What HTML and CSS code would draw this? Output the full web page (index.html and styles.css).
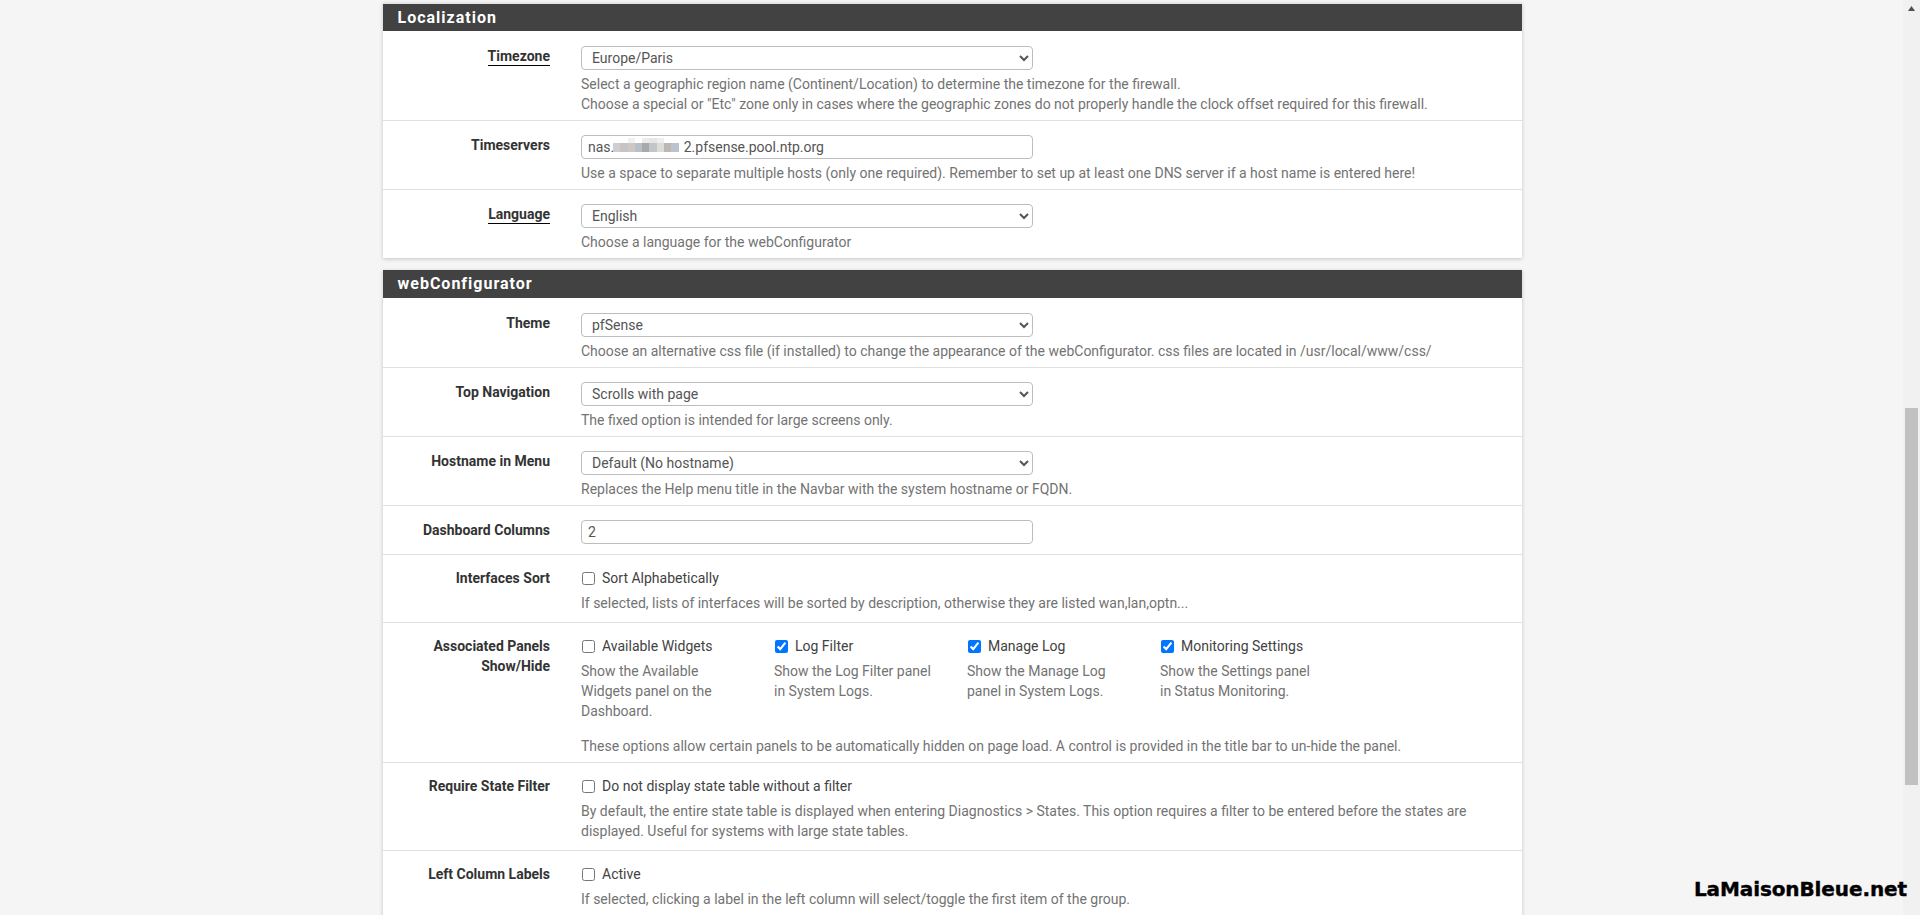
FILE: index.html
```html
<!DOCTYPE html>
<html lang="en">
<head>
<meta charset="utf-8">
<title>System: General Setup</title>
<link rel="stylesheet" href="styles.css">
</head>
<body>
<div class="viewport">
  <main class="content">
    <section class="panel">
      <h2 class="panel-title">Localization</h2>
      <div class="row row-first">
        <div class="label"><span class="toggle-label">Timezone</span></div>
        <div class="field">
          <select class="control"><option>Europe/Paris</option></select>
          <p class="help">Select a geographic region name (Continent/Location) to determine the timezone for the firewall.<br>Choose a special or "Etc" zone only in cases where the geographic zones do not properly handle the clock offset required for this firewall.</p>
        </div>
      </div>
      <div class="row">
        <div class="label">Timeservers</div>
        <div class="field">
          <div class="masked">
            <input class="control text" type="text" value="nas.                    2.pfsense.pool.ntp.org">
            <div class="mosaic">
              <i class="m1"></i><i class="m2"></i><i class="m3"></i><i class="m4"></i><i class="m5"></i><i class="m6"></i><i class="m7"></i><i class="m8"></i><i class="m9"></i>
            </div>
          </div>
          <p class="help">Use a space to separate multiple hosts (only one required). Remember to set up at least one DNS server if a host name is entered here!</p>
        </div>
      </div>
      <div class="row">
        <div class="label"><span class="toggle-label">Language</span></div>
        <div class="field">
          <select class="control"><option>English</option></select>
          <p class="help">Choose a language for the webConfigurator</p>
        </div>
      </div>
    </section>

    <section class="panel">
      <h2 class="panel-title">webConfigurator</h2>
      <div class="row row-first">
        <div class="label">Theme</div>
        <div class="field">
          <select class="control"><option>pfSense</option></select>
          <p class="help">Choose an alternative css file (if installed) to change the appearance of the webConfigurator. css files are located in /usr/local/www/css/</p>
        </div>
      </div>
      <div class="row">
        <div class="label">Top Navigation</div>
        <div class="field">
          <select class="control"><option>Scrolls with page</option></select>
          <p class="help">The fixed option is intended for large screens only.</p>
        </div>
      </div>
      <div class="row">
        <div class="label">Hostname in Menu</div>
        <div class="field">
          <select class="control"><option>Default (No hostname)</option></select>
          <p class="help">Replaces the Help menu title in the Navbar with the system hostname or FQDN.</p>
        </div>
      </div>
      <div class="row row-plain">
        <div class="label">Dashboard Columns</div>
        <div class="field">
          <input class="control text" type="text" value="2">
        </div>
      </div>
      <div class="row row-check">
        <div class="label">Interfaces Sort</div>
        <div class="field">
          <label class="check"><input type="checkbox">Sort Alphabetically</label>
          <p class="help">If selected, lists of interfaces will be sorted by description, otherwise they are listed wan,lan,optn...</p>
        </div>
      </div>
      <div class="row row-panels">
        <div class="label">Associated Panels<br>Show/Hide</div>
        <div class="field">
          <div class="columns">
            <div class="column">
              <label class="check"><input type="checkbox">Available Widgets</label>
              <p class="help">Show the Available Widgets panel on the Dashboard.</p>
            </div>
            <div class="column">
              <label class="check"><input type="checkbox" checked>Log Filter</label>
              <p class="help">Show the Log Filter panel in System Logs.</p>
            </div>
            <div class="column">
              <label class="check"><input type="checkbox" checked>Manage Log</label>
              <p class="help">Show the Manage Log panel in System Logs.</p>
            </div>
            <div class="column">
              <label class="check"><input type="checkbox" checked>Monitoring Settings</label>
              <p class="help">Show the Settings panel in Status Monitoring.</p>
            </div>
          </div>
          <p class="help help-note">These options allow certain panels to be automatically hidden on page load. A control is provided in the title bar to un-hide the panel.</p>
        </div>
      </div>
      <div class="row row-check">
        <div class="label">Require State Filter</div>
        <div class="field">
          <label class="check"><input type="checkbox">Do not display state table without a filter</label>
          <p class="help">By default, the entire state table is displayed when entering Diagnostics &gt; States. This option requires a filter to be entered before the states are displayed. Useful for systems with large state tables.</p>
        </div>
      </div>
      <div class="row row-check">
        <div class="label">Left Column Labels</div>
        <div class="field">
          <label class="check"><input type="checkbox">Active</label>
          <p class="help">If selected, clicking a label in the left column will select/toggle the first item of the group.</p>
        </div>
      </div>
    </section>
  </main>
  <aside class="scrollbar">
    <svg class="arrow" width="7" height="5" viewBox="0 0 7 5"><path d="M3.5 0L7 5H0z"/></svg>
    <div class="thumb"></div>
  </aside>
  <div class="watermark">LaMaisonBleue.net</div>
</div>
</body>
</html>
```
FILE: styles.css
```css
* { box-sizing: border-box; }
html, body { height: 100%; margin: 0; overflow: hidden; }
body {
  background: #f5f5f5;
  font-family: Roboto, "Liberation Sans", sans-serif;
  font-size: 14px;
  line-height: 20px;
  color: #333;
}
.viewport {
  position: relative;
  display: flex;
  height: 915px;
  overflow: hidden;
}
.content {
  flex: 1;
  min-width: 0;
  padding: 3px 0 0 382.5px;
}
.panel {
  width: 1139px;
  margin-bottom: 12px;
  background: #fff;
  box-shadow: 0 1px 4px rgba(0, 0, 0, .2);
}
.panel-title {
  height: 28px;
  margin: 0;
  padding: 0 15px;
  background: #424242;
  color: #fff;
  font-size: 16px;
  font-weight: 700;
  line-height: 27px;
  letter-spacing: 1px;
}
.panel:first-child .panel-title { border-top: 1px solid #e4e4e4; }
.row {
  display: flex;
  padding: 14px 0 6px;
  border-top: 1px solid #e0e0e0;
}
.row-first { padding-top: 15px; border-top: 0; }
.row-plain { padding-bottom: 10px; }
.row-check { padding: 13px 0 9px; }
.row-panels { padding: 13px 0 6px; }
.label {
  flex: 0 0 167.5px;
  text-align: right;
  font-weight: 700;
  font-size: 14px;
  color: #333;
}
.toggle-label { padding-bottom: 1px; border-bottom: 1px solid #000; }
.field {
  flex: 1;
  min-width: 0;
  margin-left: 31px;
  padding-right: 23px;
}
.control {
  display: block;
  width: 451.5px;
  height: 24px;
  padding: 0 6px;
  background: #fff;
  border: 1px solid #bdbdbd;
  border-radius: 4px;
  font: 14px/20px Roboto, "Liberation Sans", sans-serif;
  color: #555;
}
.help {
  margin: 4px 0 0;
  font-size: 14px;
  color: #737373;
}
.check {
  display: flex;
  align-items: center;
  height: 20px;
  font-size: 14px;
  color: #424242;
}
.check input {
  flex: none;
  width: 13px;
  height: 13px;
  margin: 0 7px 0 1px;
}
.check + .help, .column .help { margin-top: 5px; }
.columns { display: flex; }
.column { flex: 0 0 193px; padding-right: 30px; min-height: 85px; }
.help-note { margin-top: 15px; }
.masked { position: relative; width: 451px; }
.mosaic {
  position: absolute;
  left: 32px;
  top: 3px;
  display: flex;
  height: 14px;
}
.mosaic i { display: block; width: 7.3px; height: 14px; background: #d8d8d8; }
.mosaic .m1 { background: linear-gradient(#fff 0 5px, #cfcdd0 5px); }
.mosaic .m2 { background: linear-gradient(#fff 0 5px, #c6c4c4 5px); }
.mosaic .m3 { background: linear-gradient(#f0f0f0 0 5px, #cdc8c6 5px); }
.mosaic .m4 { background: linear-gradient(#fff 0 5px, #b9c0ca 5px); }
.mosaic .m5 { background: linear-gradient(#ececec 0 5px, #a9a9ab 5px); }
.mosaic .m6 { background: linear-gradient(#e6e6e6 0 5px, #c3c6c9 5px); }
.mosaic .m7 { background: linear-gradient(#eeeeee 0 5px, #dcdcdc 5px); }
.mosaic .m8 { background: linear-gradient(#fff 0 5px, #bdb9b2 5px); }
.mosaic .m9 { background: linear-gradient(#fff 0 5px, #bcc3cf 5px); }
.scrollbar {
  position: relative;
  flex: 0 0 17px;
  background: #f1f1f1;
}
.arrow { position: absolute; left: 5px; top: 6px; fill: #505050; }
.thumb {
  position: absolute;
  left: 2px;
  top: 408px;
  width: 13px;
  height: 377px;
  background: #c1c1c1;
}
.watermark {
  position: absolute;
  right: 13px;
  top: 877px;
  font-family: "DejaVu Sans", sans-serif;
  font-size: 20px;
  font-weight: 700;
  line-height: 24px;
  letter-spacing: -.1px;
  -webkit-text-stroke: .4px #000;
  color: #000;
}
```
